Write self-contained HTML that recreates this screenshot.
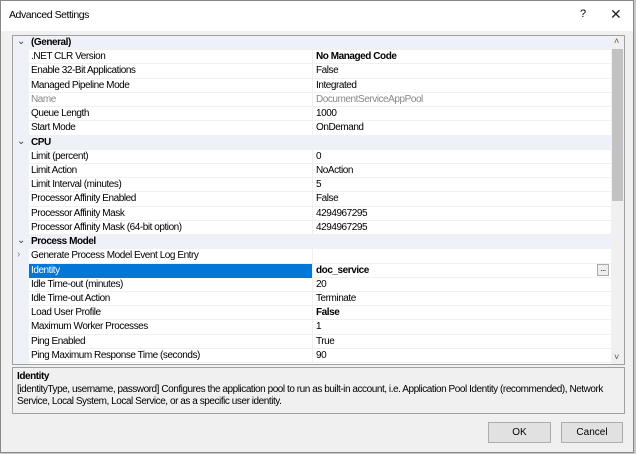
<!DOCTYPE html>
<html><head><style>
*{margin:0;padding:0;box-sizing:border-box}
body{width:636px;height:454px;background:#c8c8c8;font-family:"Liberation Sans",sans-serif;font-size:10px;letter-spacing:-0.45px;color:#000;position:relative;overflow:hidden}
.win{position:absolute;left:0;top:0;width:634px;height:453px;background:#f0f0f0;border:1px solid #888}
.title{position:absolute;left:0;top:0;width:632px;height:30px;background:#fff}
.title span{position:absolute;left:8px;top:8px;font-size:10.5px}
.q{position:absolute;left:579px;top:7px;font-size:11px}
.x{position:absolute;left:609px;top:5px;font-size:14px;font-weight:normal;color:#222}
.grid{position:absolute;left:11px;top:34px;width:613px;height:330px;background:#fff;border:1px solid #a0a0a0;overflow:hidden}
.row{position:absolute;left:0;width:598px;height:14.22px;border-bottom:1px solid #f0f0f0;line-height:13px}
.row .n{position:absolute;left:18px;top:0}
.row .v{position:absolute;left:299px;top:0;width:299px;height:14px;border-left:1px solid #f0f0f0;padding-left:3px}
.cat{background:#eef2f8;font-weight:bold}
.ch{position:absolute;left:4px;top:-1px;font-weight:normal;color:#444;font-size:10px}
.gut{position:absolute;left:0;top:0;width:16px;height:330px;background:#eef2f8}
.sel .n{background:#0078d7;color:#fff;left:16px;width:283px;padding-left:2px;height:14px}
.dis{color:#888}
.b{font-weight:bold}
.sb{position:absolute;left:598px;top:0;width:13px;height:330px;background:#f0f0f0}
.thumb{position:absolute;left:1px;top:13px;width:11px;height:152px;background:#c2c2c2}
.desc{position:absolute;left:11px;top:366px;width:613px;height:47px;border:1px solid #a0a0a0;background:#f0f0f0;padding:3px 4px;line-height:12.5px}
.btn{position:absolute;top:421px;height:21px;background:#e1e1e1;border:1px solid #adadad;text-align:center;line-height:19px;letter-spacing:0}
</style></head><body>
<div class="win">
<div class="title"><span>Advanced Settings</span><div class="q">?</div><div class="x">✕</div></div>
<div class="grid">
<div class="gut"></div>
<div class="row cat" style="top:0px"><span class="ch">⌄</span><span class="n">(General)</span></div>
<div class="row" style="top:14.2px"><span class="n">.NET CLR Version</span><span class="v b">No Managed Code</span></div>
<div class="row" style="top:28.4px"><span class="n">Enable 32-Bit Applications</span><span class="v">False</span></div>
<div class="row" style="top:42.7px"><span class="n">Managed Pipeline Mode</span><span class="v">Integrated</span></div>
<div class="row dis" style="top:56.9px"><span class="n">Name</span><span class="v">DocumentServiceAppPool</span></div>
<div class="row" style="top:71.1px"><span class="n">Queue Length</span><span class="v">1000</span></div>
<div class="row" style="top:85.3px"><span class="n">Start Mode</span><span class="v">OnDemand</span></div>
<div class="row cat" style="top:99.5px"><span class="ch">⌄</span><span class="n">CPU</span></div>
<div class="row" style="top:113.8px"><span class="n">Limit (percent)</span><span class="v">0</span></div>
<div class="row" style="top:128px"><span class="n">Limit Action</span><span class="v">NoAction</span></div>
<div class="row" style="top:142.2px"><span class="n">Limit Interval (minutes)</span><span class="v">5</span></div>
<div class="row" style="top:156.4px"><span class="n">Processor Affinity Enabled</span><span class="v">False</span></div>
<div class="row" style="top:170.6px"><span class="n">Processor Affinity Mask</span><span class="v">4294967295</span></div>
<div class="row" style="top:184.9px"><span class="n">Processor Affinity Mask (64-bit option)</span><span class="v">4294967295</span></div>
<div class="row cat" style="top:199.1px"><span class="ch">⌄</span><span class="n">Process Model</span></div>
<div class="row" style="top:213.3px"><span class="ch" style="color:#888">›</span><span class="n">Generate Process Model Event Log Entry</span><span class="v"></span></div>
<div class="row sel" style="top:227.5px"><span class="n">Identity</span><span class="v b">doc_service<span style="position:absolute;right:2px;top:0;width:12px;height:12px;border:1px solid #aaa;background:#eee;font-size:8px;line-height:8px;text-align:center;font-weight:normal">...</span></span></div>
<div class="row" style="top:241.7px"><span class="n">Idle Time-out (minutes)</span><span class="v">20</span></div>
<div class="row" style="top:256px"><span class="n">Idle Time-out Action</span><span class="v">Terminate</span></div>
<div class="row" style="top:270.2px"><span class="n">Load User Profile</span><span class="v b">False</span></div>
<div class="row" style="top:284.4px"><span class="n">Maximum Worker Processes</span><span class="v">1</span></div>
<div class="row" style="top:298.6px"><span class="n">Ping Enabled</span><span class="v">True</span></div>
<div class="row" style="top:312.8px"><span class="n">Ping Maximum Response Time (seconds)</span><span class="v">90</span></div>
<div class="sb"><div style="position:absolute;left:3px;top:0;font-size:9px;color:#555">˄</div><div class="thumb"></div><div style="position:absolute;left:3px;top:316px;font-size:9px;color:#555">˅</div></div>
</div>
<div class="desc"><b>Identity</b><br>[identityType, username, password] Configures the application pool to run as built-in account, i.e. Application Pool Identity (recommended), Network<br>Service, Local System, Local Service, or as a specific user identity.</div>
<div class="btn" style="left:487px;width:63px">OK</div>
<div class="btn" style="left:560px;width:62px">Cancel</div>
</div>
</body></html>
